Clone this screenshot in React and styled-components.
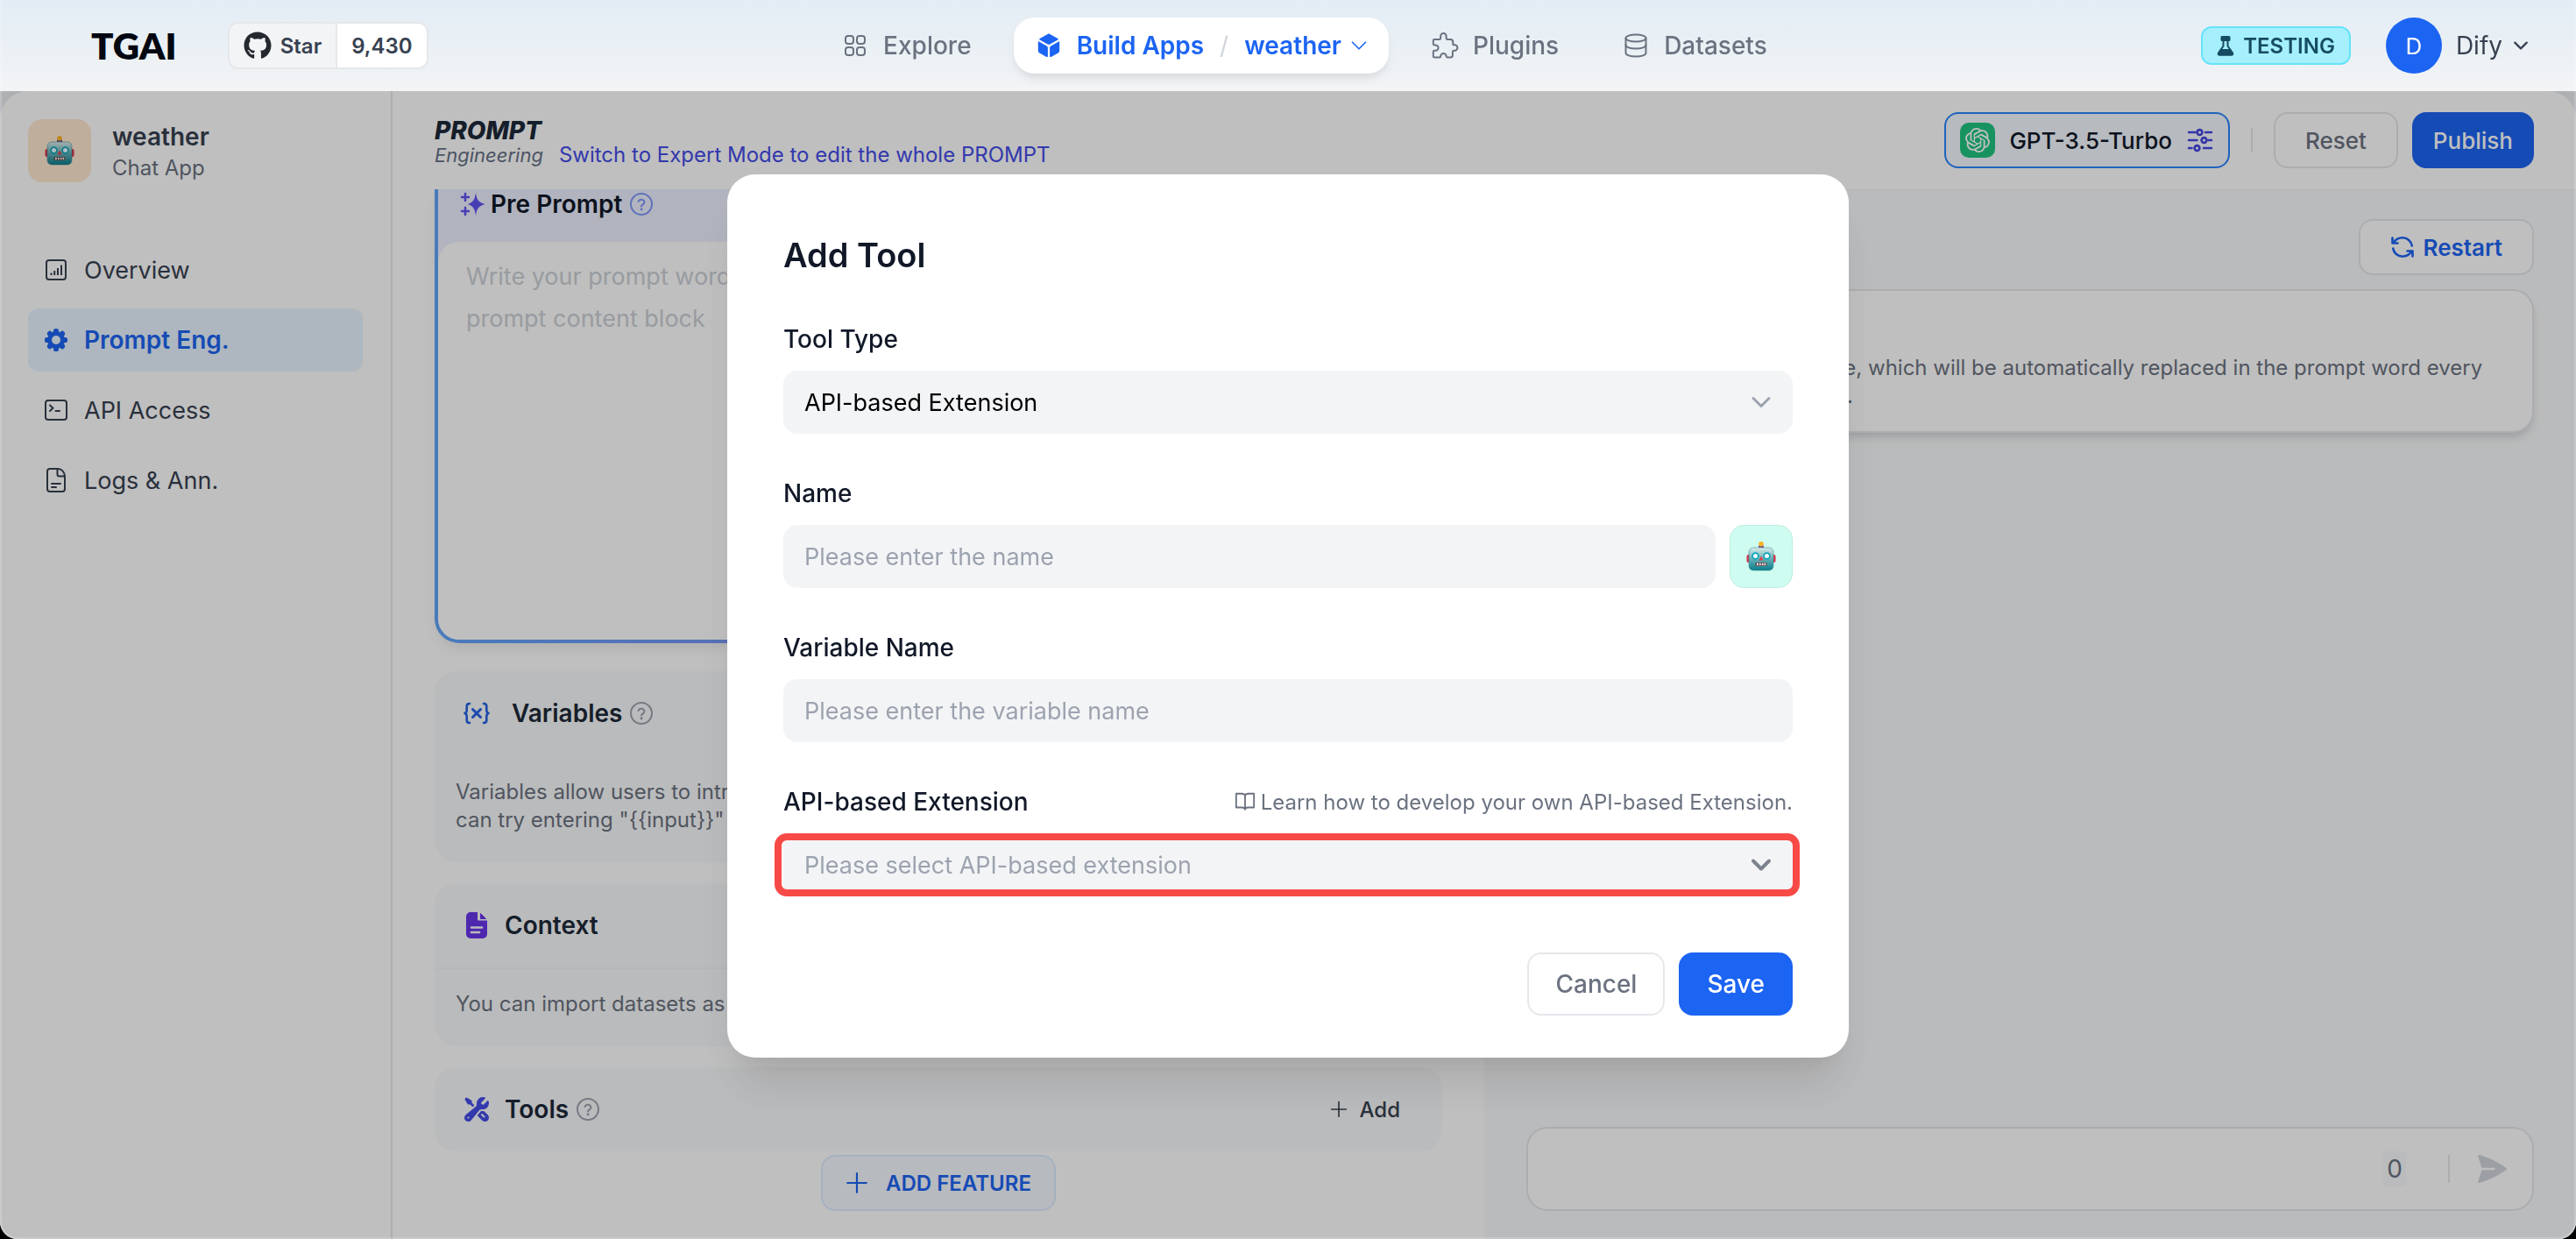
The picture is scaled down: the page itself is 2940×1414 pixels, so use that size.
import React from "react";
import styled, { createGlobalStyle, css } from "styled-components";
import { FaGithub } from "react-icons/fa";
import { SiOpenai } from "react-icons/si";
import {
  HiOutlineSquares2X2,
  HiWrenchScrewdriver,
  HiPaperAirplane,
} from "react-icons/hi2";

const GlobalStyle = createGlobalStyle`
  *, *::before, *::after { box-sizing: border-box; }
  html { background: #000; }
  body { margin: 0; }
  body, button, input, select, textarea {
    font-family: Inter, "Liberation Sans", sans-serif;
  }
  button, input, select, textarea { font-size: inherit; }
  h1, h2, h3, p { margin: 0; }
  a { color: inherit; text-decoration: none; }
  svg { display: block; flex: none; }
`;

/* ---------- shell ---------- */

const Shell = styled.div`
  display: flex;
  flex-direction: column;
  height: 100vh;
  overflow: hidden;
  border-radius: 0 0 20px 20px;
  background: #e9ecf1;
  color: #111827;
  font-size: 28px;
`;

const WindowEdge = styled.div`
  position: fixed;
  inset: 0;
  z-index: 30;
  border: solid rgba(255, 255, 255, 0.2);
  border-width: 0 2px 2px;
  border-radius: 0 0 20px 20px;
  pointer-events: none;
`;

const TopBar = styled.header`
  position: relative;
  z-index: 20;
  flex: none;
  display: flex;
  align-items: center;
  justify-content: space-between;
  height: 104px;
  padding: 0 54px 0 104px;
  background: linear-gradient(#e3ecf6, #eaf0f4 50%, #f3f4f6);
`;

const Side = styled.div`
  display: flex;
  align-items: center;
  gap: ${(p) => p.$gap}px;
  padding-left: ${(p) => p.$indent || 0}px;
`;

const Logo = styled.a`
  font-family: Lato, sans-serif;
  font-size: 42px;
  line-height: 48px;
  font-weight: 800;
  color: #030712;
`;

const StarBadge = styled.a`
  display: flex;
  align-items: stretch;
  height: 54px;
  border: 2px solid #e5e7eb;
  border-radius: 12px;
  overflow: hidden;
  font-size: 24px;
  font-weight: 600;
  color: #374151;
`;

const StarPart = styled.span`
  display: flex;
  align-items: center;
  gap: 10px;
  padding: 0 16px;
  background: ${(p) => (p.$count ? "#fff" : "#f3f4f6")};
  border-left: ${(p) => (p.$count ? "2px solid #e5e7eb" : "0")};
`;

const Nav = styled.nav`
  display: flex;
  align-items: center;
  gap: 24px;
`;

const navItem = css`
  display: flex;
  align-items: center;
  height: 64px;
  padding: 0 24px;
  border-radius: 24px;
  font-weight: 500;
  white-space: nowrap;
`;

const NavLink = styled.a`
  ${navItem}
  gap: 16px;
  color: #6b7280;
`;

const ActiveNav = styled.div`
  ${navItem}
  gap: 18px;
  background: #fff;
  color: #1c64f2;
  font-weight: 600;
  box-shadow: 0 8px 12px -2px rgba(16, 24, 40, 0.08), 0 4px 8px -2px rgba(16, 24, 40, 0.05);
`;

const NavPart = styled.a`
  display: flex;
  align-items: center;
  gap: ${(p) => p.$gap || 16}px;
`;

const Slash = styled.span`
  color: #d1d5db;
  font-weight: 400;
`;

const EnvTag = styled.span`
  display: flex;
  align-items: center;
  gap: 10px;
  height: 44px;
  padding: 0 16px;
  border: 2px solid #67e3f9;
  border-radius: 12px;
  background: #a5f0fc;
  color: #164c63;
  font-size: 24px;
  font-weight: 600;
`;

const Account = styled.button`
  display: flex;
  align-items: center;
  gap: 12px;
  padding: 0;
  border: 0;
  background: none;
  color: #374151;
`;

const Avatar = styled.span`
  display: flex;
  align-items: center;
  justify-content: center;
  width: 64px;
  height: 64px;
  margin-right: 4px;
  border-radius: 50%;
  background: #1c64f2;
  color: #fff;
  font-size: 26px;
`;

/* ---------- body ---------- */

const Body = styled.div`
  flex: 1;
  min-height: 0;
  display: flex;
  overflow: hidden;
  border-radius: 32px 32px 0 0;
  background: #fff;
`;

const Sidebar = styled.aside`
  flex: none;
  width: 448px;
  padding: 32px;
  border-right: 2px solid #e5e7eb;
  display: flex;
  flex-direction: column;
  gap: 64px;
`;

const AppInfo = styled.div`
  display: flex;
  align-items: center;
  gap: 24px;
`;

const EmojiTile = styled.span`
  flex: none;
  display: flex;
  align-items: center;
  justify-content: center;
  width: 72px;
  height: 72px;
  border-radius: 16px;
  background: ${(p) => p.$bg};
`;

const AppName = styled.h1`
  font-size: 28px;
  line-height: 40px;
  font-weight: 600;
  color: #374151;
`;

const AppKind = styled.p`
  font-size: 24px;
  line-height: 32px;
  color: #6b7280;
`;

const Menu = styled.nav`
  display: flex;
  flex-direction: column;
  gap: 8px;
`;

const MenuLink = styled.a`
  display: flex;
  align-items: center;
  gap: 16px;
  height: 72px;
  padding: 0 16px;
  border-radius: 12px;
  color: ${(p) => (p.$active ? "#1c64f2" : "#374151")};
  background: ${(p) => (p.$active ? "#e9f4ff" : "transparent")};
  font-size: ${(p) => (p.$active ? 28 : 27)}px;
  font-weight: ${(p) => (p.$active ? 600 : 400)};
`;

const Workspace = styled.main`
  flex: 1;
  min-width: 0;
  display: flex;
  flex-direction: column;
`;

const WorkBar = styled.div`
  flex: none;
  display: flex;
  align-items: center;
  justify-content: space-between;
  height: 112px;
  padding: 0 48px;
`;

const TitleBlock = styled.div`
  padding-top: 6px;
`;

const PromptTitle = styled.h2`
  font-size: 28px;
  line-height: 28px;
  font-weight: 800;
  font-style: italic;
  color: #1d2939;
`;

const SubRow = styled.div`
  display: flex;
  align-items: center;
  gap: 18px;
  line-height: 28px;
`;

const Engineering = styled.span`
  font-size: 22px;
  font-style: italic;
  color: #667085;
`;

const ExpertLink = styled.a`
  font-size: 24px;
  color: #444ce7;
`;

const BarActions = styled.div`
  display: flex;
  align-items: center;
`;

const ModelButton = styled.button`
  display: flex;
  align-items: center;
  gap: 16px;
  height: 64px;
  padding: 0 16px;
  border: 2px solid #2a85fb;
  border-radius: 16px;
  background: #f5f8ff;
  color: #101828;
  font-size: 26px;
  font-weight: 500;
`;

const ModelLogo = styled.span`
  display: flex;
  align-items: center;
  justify-content: center;
  width: 40px;
  height: 40px;
  border-radius: 10px;
  background: #20c580;
  color: #fff;
`;

const Divider = styled.span`
  width: 2px;
  height: ${(p) => p.$height}px;
  margin: 0 24px;
  background: #e5e7eb;
`;

const Button = styled.button`
  display: flex;
  align-items: center;
  justify-content: center;
  gap: 10px;
  height: ${(p) => (p.$large ? 72 : 64)}px;
  padding: 0 ${(p) => p.$pad || 34}px;
  border: 2px solid ${(p) => (p.$primary ? "#1c64f2" : "#e5e7eb")};
  border-radius: 16px;
  background: ${(p) => (p.$primary ? "#1c64f2" : "#fff")};
  color: ${(p) => (p.$primary ? "#fff" : p.$blue ? "#1c64f2" : "#6b7280")};
  font-size: ${(p) => (p.$large ? 28 : 26)}px;
  font-weight: ${(p) => (p.$blue ? 600 : 500)};
`;

const ButtonRow = styled.div`
  display: flex;
  justify-content: flex-end;
  gap: 16px;
`;

const Columns = styled.div`
  flex: 1;
  min-height: 0;
  display: grid;
  grid-template-columns: 1fr 1fr;
`;

const Editor = styled.section`
  min-width: 0;
  display: flex;
  flex-direction: column;
  padding: 0 48px 32px;
`;

const PromptCard = styled.div`
  flex: none;
  display: flex;
  flex-direction: column;
  height: 518px;
  padding: 0 4px 4px;
  border-radius: 0 0 28px 28px;
  background: linear-gradient(90deg, #60a4fa, #7795f5 30%, #8b8af5);
  box-shadow: 0 8px 16px -4px rgba(16, 24, 40, 0.1);
`;

const PromptInner = styled.div`
  flex: 1;
  display: flex;
  flex-direction: column;
  border-radius: 0 0 24px 24px;
  background: #ecf1ff;
  overflow: hidden;
`;

const PromptHead = styled.div`
  display: flex;
  align-items: center;
  gap: 4px;
  height: 60px;
  padding: 0 24px 26px;
  font-weight: 600;
  color: #101828;
`;

const PromptLabel = styled.label`
  margin-right: 4px;
`;

const PromptInput = styled.textarea`
  flex: 1;
  width: 100%;
  padding: 16px 32px;
  border: 0;
  border-radius: 24px 24px 0 0;
  background: #fff;
  resize: none;
  outline: none;
  font-size: 27px;
  line-height: 48px;
  &::placeholder { color: #cbd0d6; opacity: 1; }
`;

const Panels = styled.div`
  display: flex;
  flex-direction: column;
  gap: 24px;
  margin: 32px 0 4px;
`;

const Panel = styled.section`
  border-radius: 24px;
  background: #f9fafb;
`;

const PanelHead = styled.div`
  display: flex;
  align-items: center;
  height: 96px;
  padding: 0 48px 0 32px;
`;

const PanelTitle = styled.h3`
  margin: 0 8px 0 ${(p) => (p.$wide ? 24 : 16)}px;
  font-size: 28px;
  font-weight: 600;
  color: #1d2939;
`;

const PanelText = styled.p`
  padding: 24px 24px 32px;
  border-top: 2px solid ${(p) => (p.$ruled ? "#f3f4f6" : "transparent")};
  font-size: 24px;
  line-height: 32px;
  color: #6b7280;
`;

const AddButton = styled.button`
  display: flex;
  align-items: center;
  gap: 14px;
  margin-left: auto;
  padding: 0;
  border: 0;
  background: none;
  font-size: 24px;
  font-weight: 500;
  color: #374151;
`;

const FeatureButton = styled.button`
  align-self: center;
  flex: none;
  display: flex;
  align-items: center;
  gap: 20px;
  height: 64px;
  padding: 0 26px;
  border: 2px solid #dcedff;
  border-radius: 16px;
  background: #f5f8ff;
  color: #1c64f2;
  font-size: 24px;
  font-weight: 600;
`;

const Preview = styled.section`
  min-width: 0;
  display: flex;
  flex-direction: column;
  gap: 16px;
  padding: 32px 48px;
  border-top: 2px solid #f3f4f6;
  background: #f9fafb;
`;

const PreviewHead = styled.div`
  display: flex;
  align-items: center;
  justify-content: space-between;
`;

const CardTitle = styled.h3`
  font-size: 28px;
  line-height: 40px;
  font-weight: 600;
  color: #1f2937;
`;

const InputCard = styled.div`
  padding: 24px 36px;
  border: 2px solid #e5e7eb;
  border-radius: 24px;
  background: #fff;
  box-shadow: 0 8px 12px -2px rgba(16, 24, 40, 0.12), 0 4px 6px -2px rgba(16, 24, 40, 0.06);
`;

const CardText = styled.p`
  padding-top: 8px;
  font-size: 24px;
  line-height: 32px;
  color: #6b7280;
`;

const Composer = styled.div`
  display: flex;
  align-items: center;
  height: 96px;
  margin-top: auto;
  padding: 0 26px;
  border: 2px solid #e5e7eb;
  border-radius: 24px;
  background: #fff;
`;

const ComposerInput = styled.input`
  flex: 1;
  min-width: 0;
  border: 0;
  outline: none;
  background: none;
`;

const Count = styled.output`
  padding: 0 4px;
  margin-right: 24px;
  background: #f9fafb;
  line-height: 40px;
  color: #6b7280;
`;

const SendButton = styled.button`
  margin-left: 4px;
  padding: 0;
  border: 0;
  background: none;
  color: #d1d5db;
`;

/* ---------- dialog ---------- */

const Backdrop = styled.div`
  position: fixed;
  inset: 0;
  z-index: 10;
  display: flex;
  align-items: center;
  justify-content: center;
  padding-bottom: 8px;
  border-radius: 0 0 20px 20px;
  background: rgba(0, 0, 0, 0.25);
`;

const Dialog = styled.form`
  width: 1280px;
  max-width: 100%;
  padding: 64px 64px 48px;
  border-radius: 32px;
  background: #fff;
  color: #111827;
  font-size: 28px;
  box-shadow: 0 40px 50px -10px rgba(0, 0, 0, 0.1), 0 20px 20px -10px rgba(0, 0, 0, 0.04);
`;

const DialogTitle = styled.h2`
  margin-bottom: 32px;
  font-size: 38px;
  line-height: 56px;
  font-weight: 600;
`;

const Field = styled.div`
  margin-bottom: ${(p) => (p.$last ? 64 : 32)}px;
`;

const LabelRow = styled.div`
  display: flex;
  align-items: center;
  justify-content: space-between;
  height: 72px;
`;

const Label = styled.label`
  font-weight: 500;
`;

const DocLink = styled.a`
  display: flex;
  align-items: center;
  gap: 6px;
  font-size: 24px;
  color: #6b7280;
`;

const Control = styled.div`
  position: relative;
  display: flex;
  align-items: center;
  gap: 16px;
`;

const box = css`
  flex: 1;
  min-width: 0;
  height: 72px;
  padding: 0 24px;
  border: 0;
  border-radius: 16px;
  outline: none;
  background: #f3f4f6;
  font-size: 27px;
`;

const TextInput = styled.input`
  ${box}
  &::placeholder { color: #9ca3af; opacity: 1; }
`;

const Select = styled.select`
  ${box}
  appearance: none;
  color: ${(p) => (p.$empty ? "#9ca3af" : "#000")};
`;

const SelectArrow = styled.span`
  position: absolute;
  right: 24px;
  color: ${(p) => p.$color};
  pointer-events: none;
`;

const Highlight = styled.span`
  position: absolute;
  inset: 0 -8px 0 -10px;
  border: 8px solid #f74a46;
  border-radius: 14px;
  pointer-events: none;
`;

const IconButton = styled.button`
  flex: none;
  display: flex;
  align-items: center;
  justify-content: center;
  width: 72px;
  height: 72px;
  padding: 0;
  border: 1px solid #bdeee0;
  border-radius: 16px;
  background: #cffcf0;
`;

/* ---------- icons ---------- */

const Icon = ({ size = 32, box: b = 32, width = 2, children, ...rest }) => (
  <svg
    width={size}
    height={size}
    viewBox={`0 0 ${b} ${b}`}
    fill="none"
    stroke="currentColor"
    strokeWidth={width}
    strokeLinecap="round"
    strokeLinejoin="round"
    aria-hidden="true"
    {...rest}
  >
    {children}
  </svg>
);

const Chevron = ({ size = 24, width = 2 }) => (
  <Icon size={size} box={24} width={width}>
    <path d="M3 7.5l9 9 9-9" />
  </Icon>
);

const Help = ({ color = "#9ca3af" }) => (
  <Icon size={28} box={28} width={2} color={color}>
    <circle cx="14" cy="14" r="12" />
    <path d="M10.6 11a3.5 3.5 0 0 1 6.8 1.1c0 2.3-3.4 2.6-3.4 4.4" />
    <path d="M14 19.8h.01" strokeWidth="3" />
  </Icon>
);

const Plus = ({ size }) => (
  <Icon size={size} box={24}>
    <path d="M12 2v20M2 12h20" />
  </Icon>
);

const Puzzle = () => (
  <Icon>
    <path d="M4 9h5.5c1 0 1.700-.7 1.700-1.700V5.300a3.200 3.200 0 0 1 6.400 0v2c0 1 .7 1.700 1.700 1.700H22.500c1.700 0 2.700 1 2.700 2.700v2c0 1 .6 1.600 1.600 1.600h.4a3.200 3.200 0 0 1 0 6.400h-.6c-1 0-1.700.7-1.700 1.700V27c0 1.800-1 2.600-2.700 2.600H19c-.8 0-1.300-.5-1.300-1.300a3.200 3.200 0 0 0-6.500 0c0 .8-.5 1.300-1.300 1.300H4.200c-.9 0-1.400-.5-1.400-1.400v-5c0-.9.5-1.400 1.400-1.400h1.200a3.200 3.200 0 0 0 0-6.400H4.200c-.9 0-1.400-.5-1.400-1.400v-3.600C2.800 9.500 3.200 9 4 9z" />
  </Icon>
);

const Database = () => (
  <Icon>
    <ellipse cx="16" cy="7.500" rx="11.500" ry="4" />
    <path d="M4.500 7.500v17c0 2.200 5 4 11.500 4s11.500-1.800 11.500-4v-17" />
    <path d="M4.500 15.500c0 2.200 5 4 11.500 4s11.500-1.800 11.500-4" />
  </Icon>
);

const Cube = () => (
  <svg width="32" height="32" viewBox="0 0 32 32" fill="currentColor" aria-hidden="true">
    <path d="M16 2.6c.5 0 .9.1 1.3.3l9 5c.6.4.6 1.1 0 1.5l-9 5c-.8.5-1.8.5-2.6 0l-9-5c-.6-.4-.6-1.1 0-1.5l9-5c.4-.2.8-.3 1.3-.3z" />
    <path d="M4.4 11.2l9.2 5.2c.8.5 1.3 1.3 1.3 2.2v9.5c0 .9-.8 1.3-1.5.9l-8-4.5c-1-.6-1.6-1.6-1.6-2.7v-10c0-.6.2-.8.6-.6z" />
    <path d="M27.6 11.2l-9.2 5.2c-.8.5-1.3 1.3-1.3 2.2v9.5c0 .9.8 1.3 1.5.9l8-4.5c1-.6 1.6-1.6 1.6-2.7v-10c0-.6-.2-.8-.6-.6z" />
  </svg>
);

const Flask = () => (
  <svg width="20" height="24" viewBox="0 0 20 24" fill="none" aria-hidden="true">
    <path d="M7.5 6v6.5L2 20.5c-.6 1 0 2 1 2h14c1 0 1.6-1 1-2l-5.500-8V6" stroke="currentColor" strokeWidth="2" />
    <rect x="4.500" y="1" width="11" height="6" rx="1.500" fill="currentColor" />
    <path d="M4 16h12l3 5c.5 1.200-.3 2.400-1.600 2.400H2.600C1.300 23.400.5 22.200 1 21z" fill="currentColor" />
  </svg>
);

const Chart = () => (
  <Icon>
    <rect x="5" y="5" width="22" height="22" rx="3" />
    <path d="M10.500 19.500v2.500M14.200 17v5M18 14v8M22 10.500V22" strokeLinecap="butt" />
  </Icon>
);

const Gear = () => (
  <svg width="32" height="32" viewBox="0 0 32 32" aria-hidden="true">
    <g fill="currentColor">
      {[0, 45, 90, 135].map((a) => (
        <rect key={a} x="13" y="3" width="6" height="26" rx="2.600" transform={`rotate(${a} 16 16)`} />
      ))}
    </g>
    <circle cx="16" cy="16" r="7.500" fill="none" stroke="currentColor" strokeWidth="5" />
    <circle cx="16" cy="16" r="5" fill="#e9f4ff" />
  </svg>
);

const Terminal = () => (
  <Icon>
    <rect x="4" y="5" width="24" height="22" rx="3" />
    <path d="M9 10.500l3.500 3.200L9 17M15.500 17H20" />
  </Icon>
);

const LogDoc = () => (
  <Icon>
    <path d="M18 3H9a3 3 0 0 0-3 3v20a3 3 0 0 0 3 3h14a3 3 0 0 0 3-3V12c0-5-3.500-9-8-9z" />
    <path d="M17.500 3v6.500a2 2 0 0 0 2 2H26M11 20h10M11 24h5" />
  </Icon>
);

const Sparkles = () => (
  <svg width="32" height="32" viewBox="0 0 32 32" fill="#6153f0" aria-hidden="true">
    <path d="M19 3c1.200 7.500 2.500 10.500 10.500 13C21.500 18.500 20.200 21.500 19 29c-1.200-7.500-2.500-10.500-9-13C16.500 13.500 17.800 10.500 19 3z" />
    <path
      d="M7 4v8M3 8h8M7 20v8M3 24h8"
      stroke="#6153f0"
      strokeWidth="2.600"
      strokeLinecap="round"
    />
  </svg>
);

const Sliders = () => (
  <Icon width={2.6} color="#4446e0">
    <path d="M3 7h7.500M22 7h7M3 16h9.500M25.500 16H29M3 25h3.500M20 25h9" />
    <circle cx="15.500" cy="7" r="2.900" />
    <circle cx="20.500" cy="16" r="2.900" />
    <circle cx="12.500" cy="25" r="2.900" />
  </Icon>
);

const Refresh = () => (
  <Icon size={28} box={28} width={2.6}>
    <path d="M2.500 3.500v6h6M25.500 24.500v-6h-6" />
    <path d="M3.500 9C6 5.500 9.500 3.300 14 3.300c5.500 0 10 4 10.800 9.200M24.500 19C22 22.500 18.500 24.700 14 24.700c-5.500 0-10-4-10.800-9.200" />
  </Icon>
);

const VariableIcon = () => (
  <Icon width={2.6} color="#2462e6">
    <path d="M8 5c-2.500 0-3.300 1-3.300 3v4.500c0 2-.7 3-2.200 3.500 1.500.5 2.200 1.500 2.200 3.500V24c0 2 .8 3 3.300 3M24 5c2.500 0 3.300 1 3.300 3v4.500c0 2 .7 3 2.200 3.500-1.500.5-2.200 1.500-2.200 3.500V24c0 2-.8 3-3.300 3" />
    <path d="M11.500 11.500l9 9M20.500 11.500l-9 9" strokeWidth="3" />
  </Icon>
);

const ContextIcon = () => (
  <svg width="32" height="32" viewBox="0 0 32 32" aria-hidden="true">
    <path
      d="M9 1h8v8c0 1 .6 1.500 1.500 1.500H28V26a5 5 0 0 1-5 5H9a5 5 0 0 1-5-5V6a5 5 0 0 1 5-5z"
      fill="#6835ea"
    />
    <path d="M20.500 2.500L26.500 8.500h-6z" fill="#6835ea" stroke="#6835ea" strokeLinejoin="round" />
    <path d="M10 18.500h12M10 24h9" stroke="#f9fafb" strokeWidth="2.600" strokeLinecap="round" />
  </svg>
);

const Book = () => (
  <Icon size={24} box={26} width={2}>
    <path d="M13 5.500C12.500 4 11 3 9 3H2v17h7.500c1.800 0 3 .8 3.500 2.500.5-1.700 1.700-2.500 3.500-2.500H24V3h-7c-2 0-3.500 1-4 2.500zM13 5.500v17" />
  </Icon>
);

const Robot = () => (
  <svg width="36" height="36" viewBox="0 0 36 36" aria-hidden="true">
    <defs>
      <linearGradient id="face" x1="0" y1="0" x2="0" y2="1">
        <stop offset="0" stopColor="#d9eceb" />
        <stop offset="0.45" stopColor="#6cb5b8" />
        <stop offset="1" stopColor="#0a7c8c" />
      </linearGradient>
    </defs>
    <rect x="15" y="5" width="6" height="4" rx="1.500" fill="#6b4a86" />
    <circle cx="18" cy="3.800" r="2.800" fill="#fbb324" />
    <rect x="1.500" y="16" width="5" height="9" rx="2" fill="#d6304b" />
    <rect x="29.500" y="16" width="5" height="9" rx="2" fill="#d6304b" />
    <rect x="4" y="8" width="28" height="26" rx="5" fill="url(#face)" stroke="#4f8f94" strokeWidth="0.600" />
    <circle cx="11.500" cy="17.500" r="4.200" fill="#12a5bd" />
    <circle cx="24.500" cy="17.500" r="4.200" fill="#12a5bd" />
    <circle cx="11.500" cy="17.500" r="2.500" fill="#eefcff" />
    <circle cx="24.500" cy="17.500" r="2.500" fill="#eefcff" />
    <path d="M18 17.500l2.600 5h-5.200z" fill="#e8404f" />
    <rect x="11.500" y="25" width="13" height="4" rx="1.500" fill="#5d4348" />
    <path d="M13 27h1.800M16 27h1.600M18.900 27h1.600M21.600 27h1.600" stroke="#fff" strokeWidth="2.600" />
  </svg>
);

/* ---------- page ---------- */

const menu = [
  { label: "Overview", icon: <Chart /> },
  { label: "Prompt Eng.", icon: <Gear />, active: true },
  { label: "API Access", icon: <Terminal /> },
  { label: "Logs & Ann.", icon: <LogDoc /> },
];

function Header() {
  return (
    <TopBar>
      <Side $gap={58}>
        <Logo href="#home">TGAI</Logo>
        <StarBadge href="#github">
          <StarPart>
            <FaGithub size={32} color="#24292f" />
            Star
          </StarPart>
          <StarPart $count>9,430</StarPart>
        </StarBadge>
      </Side>
      <Nav>
        <NavLink href="#explore">
          <HiOutlineSquares2X2 size={32} />
          Explore
        </NavLink>
        <ActiveNav>
          <NavPart href="#apps">
            <Cube />
            Build Apps
          </NavPart>
          <Slash>/</Slash>
          <NavPart href="#weather" $gap={10}>
            weather
            <Chevron size={20} />
          </NavPart>
        </ActiveNav>
        <NavLink href="#plugins">
          <Puzzle />
          Plugins
        </NavLink>
        <NavLink href="#datasets">
          <Database />
          Datasets
        </NavLink>
      </Nav>
      <Side $gap={40} $indent={24}>
        <EnvTag>
          <Flask />
          TESTING
        </EnvTag>
        <Account type="button">
          <Avatar>D</Avatar>
          Dify
          <Chevron size={18} width={3} />
        </Account>
      </Side>
    </TopBar>
  );
}

function SidePanel() {
  return (
    <Sidebar>
      <AppInfo>
        <EmojiTile $bg="#ffe9d0">
          <Robot />
        </EmojiTile>
        <div>
          <AppName>weather</AppName>
          <AppKind>Chat App</AppKind>
        </div>
      </AppInfo>
      <Menu>
        {menu.map((m) => (
          <MenuLink key={m.label} href="#menu" $active={m.active}>
            {m.icon}
            {m.label}
          </MenuLink>
        ))}
      </Menu>
    </Sidebar>
  );
}

function WorkHeader() {
  return (
    <WorkBar>
      <TitleBlock>
        <PromptTitle>PROMPT</PromptTitle>
        <SubRow>
          <Engineering>Engineering</Engineering>
          <ExpertLink href="#expert">Switch to Expert Mode to edit the whole PROMPT</ExpertLink>
        </SubRow>
      </TitleBlock>
      <BarActions>
        <ModelButton type="button">
          <ModelLogo>
            <SiOpenai size={28} />
          </ModelLogo>
          GPT-3.5-Turbo
          <Sliders />
        </ModelButton>
        <Divider $height={28} />
        <ButtonRow>
          <Button type="button">Reset</Button>
          <Button type="button" $primary $pad={22}>
            Publish
          </Button>
        </ButtonRow>
      </BarActions>
    </WorkBar>
  );
}

function EditorColumn() {
  return (
    <Editor>
      <PromptCard>
        <PromptInner>
          <PromptHead>
            <Sparkles />
            <PromptLabel htmlFor="pre-prompt">Pre Prompt</PromptLabel>
            <Help color="#8098f9" />
          </PromptHead>
          <PromptInput
            id="pre-prompt"
            placeholder={"Write your prompt word here,\nprompt content block"}
          />
        </PromptInner>
      </PromptCard>
      <Panels>
        <Panel>
          <PanelHead>
            <VariableIcon />
            <PanelTitle $wide>Variables</PanelTitle>
            <Help />
          </PanelHead>
          <PanelText>
            Variables allow users to introduce
            <br />
            can try entering "{"{{input}}"}"
          </PanelText>
        </Panel>
        <Panel>
          <PanelHead>
            <ContextIcon />
            <PanelTitle>Context</PanelTitle>
          </PanelHead>
          <PanelText $ruled>You can import datasets as context</PanelText>
        </Panel>
        <Panel>
          <PanelHead>
            <HiWrenchScrewdriver size={32} color="#444ce7" />
            <PanelTitle>Tools</PanelTitle>
            <Help />
            <AddButton type="button">
              <Plus size={20} />
              Add
            </AddButton>
          </PanelHead>
        </Panel>
      </Panels>
      <FeatureButton type="button">
        <Plus size={26} />
        ADD FEATURE
      </FeatureButton>
    </Editor>
  );
}

function PreviewColumn() {
  return (
    <Preview>
      <PreviewHead>
        <CardTitle>Debug and Preview</CardTitle>
        <Button type="button" $blue>
          <Refresh />
          Restart
        </Button>
      </PreviewHead>
      <InputCard>
        <CardTitle>User Input Field</CardTitle>
        <CardText>
          Fill in the value of the variable, which will be automatically replaced in the prompt word every
          time a new session is started.
        </CardText>
      </InputCard>
      <Composer>
        <ComposerInput aria-label="Message" />
        <Count>0</Count>
        <Divider $height={32} />
        <SendButton type="button" aria-label="Send">
          <HiPaperAirplane size={40} />
        </SendButton>
      </Composer>
    </Preview>
  );
}

function AddToolDialog() {
  return (
    <Backdrop>
      <Dialog role="dialog" aria-labelledby="dialog-title">
        <DialogTitle id="dialog-title">Add Tool</DialogTitle>
        <Field>
          <LabelRow>
            <Label htmlFor="tool-type">Tool Type</Label>
          </LabelRow>
          <Control>
            <Select id="tool-type">
              <option>API-based Extension</option>
            </Select>
            <SelectArrow $color="#9ca3af">
              <Chevron width={3} />
            </SelectArrow>
          </Control>
        </Field>
        <Field>
          <LabelRow>
            <Label htmlFor="tool-name">Name</Label>
          </LabelRow>
          <Control>
            <TextInput id="tool-name" placeholder="Please enter the name" />
            <IconButton type="button" aria-label="Choose icon">
              <Robot />
            </IconButton>
          </Control>
        </Field>
        <Field>
          <LabelRow>
            <Label htmlFor="tool-variable">Variable Name</Label>
          </LabelRow>
          <Control>
            <TextInput id="tool-variable" placeholder="Please enter the variable name" />
          </Control>
        </Field>
        <Field $last>
          <LabelRow>
            <Label htmlFor="tool-extension">API-based Extension</Label>
            <DocLink href="#docs">
              <Book />
              Learn how to develop your own API-based Extension.
            </DocLink>
          </LabelRow>
          <Control>
            <Select id="tool-extension" $empty>
              <option>Please select API-based extension</option>
            </Select>
            <SelectArrow $color="#7b828c">
              <Chevron width={4} />
            </SelectArrow>
            <Highlight />
          </Control>
        </Field>
        <ButtonRow>
          <Button type="button" $large $pad={30}>
            Cancel
          </Button>
          <Button type="submit" $large $primary $pad={30}>
            Save
          </Button>
        </ButtonRow>
      </Dialog>
    </Backdrop>
  );
}

export default function App() {
  return (
    <>
      <GlobalStyle />
      <Shell>
        <Header />
        <Body>
          <SidePanel />
          <Workspace>
            <WorkHeader />
            <Columns>
              <EditorColumn />
              <PreviewColumn />
            </Columns>
          </Workspace>
        </Body>
      </Shell>
      <AddToolDialog />
      <WindowEdge />
    </>
  );
}
